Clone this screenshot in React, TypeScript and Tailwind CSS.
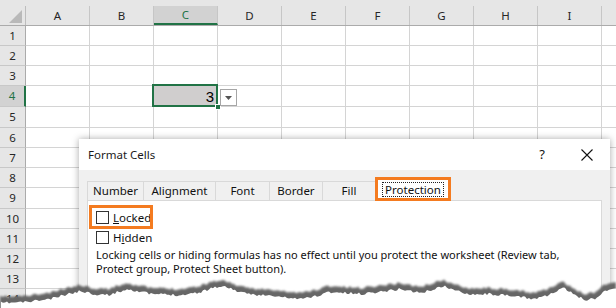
import React from 'react';

const COLS = ['A', 'B', 'C', 'D', 'E', 'F', 'G', 'H', 'I', ''];
const ROW_H = [20, 20, 20, 21, 21, 20, 20, 20, 21, 20, 20, 20, 20, 20];

// rough outline of the torn paper edge (page coords)
const ANCHORS: [number, number][] = [
  [0, 297], [25, 296], [50, 293], [67, 288], [80, 285], [93, 288], [107, 289],
  [127, 283], [150, 288], [180, 289], [200, 286], [213, 281], [227, 281],
  [240, 287], [260, 289], [290, 292], [300, 293], [320, 289], [327, 286],
  [360, 288], [400, 283], [420, 287], [443, 280], [455, 285], [470, 288],
  [490, 288], [507, 290], [520, 291], [533, 293], [550, 288], [563, 282],
  [572, 288], [585, 294], [595, 292], [605, 284], [616, 282],
];

function tornPath(top: number) {
  let seed = 11;
  const rnd = () => {
    seed = (seed * 16807) % 2147483647;
    return seed / 2147483647;
  };
  const pts: string[] = [];
  for (let x = 0; x <= 616; x += 2) {
    let i = 0;
    while (i < ANCHORS.length - 2 && ANCHORS[i + 1][0] < x) i++;
    const [x1, y1] = ANCHORS[i];
    const [x2, y2] = ANCHORS[i + 1];
    const t = x2 === x1 ? 0 : (x - x1) / (x2 - x1);
    let y = y1 + (y2 - y1) * Math.min(1, Math.max(0, t));
    y += (rnd() - 0.5) * 2.6;
    pts.push(`${x},${(y - top).toFixed(1)}`);
  }
  return 'M' + pts.join(' L') + ' L616,60 L0,60 Z';
}

function TornEdge() {
  const d = tornPath(262);
  return (
    <svg
      className="absolute left-0 top-[262px] pointer-events-none"
      width={616}
      height={46}
      viewBox="0 0 616 46"
    >
      <defs>
        <filter id="tear" x="-5%" y="-50%" width="110%" height="200%">
          <feGaussianBlur stdDeviation="1.3" />
        </filter>
      </defs>
      <path d={d} fill="#666666" filter="url(#tear)" />
      <path d={d} fill="#ffffff" transform="translate(1,6)" />
    </svg>
  );
}

function Checkbox() {
  return <div className="w-[13px] h-[13px] border border-[#333333] bg-white shrink-0" />;
}

function FormatCellsDialog() {
  const tabs = [
    { label: 'Number', w: 'w-[57px]' },
    { label: 'Alignment', w: 'w-[72px]' },
    { label: 'Font', w: 'w-[54px]' },
    { label: 'Border', w: 'w-[53px]' },
    { label: 'Fill', w: 'w-[53px]' },
  ];
  return (
    <div className="absolute left-[79px] top-[139px] w-[531px] h-[180px] bg-[#f0f0f0] shadow-[0_0_7px_rgba(0,0,0,0.35)] font-['Noto_Sans',sans-serif] text-[11px] text-[#111111]">
      <div className="h-[31px] bg-white flex items-center pl-[9px] pr-[17px]">
        <span className="text-[11.5px] text-[#1a1a1a]">Format Cells</span>
        <span className="ml-auto mr-[36px] text-[13px]">?</span>
        <svg width="12" height="12" viewBox="0 0 12 12">
          <path d="M0.5 0.5 L11.5 11.5 M11.5 0.5 L0.5 11.5" stroke="#111" strokeWidth="1.1" />
        </svg>
      </div>
      <div className="pt-[8px] px-[8px]">
        <div className="flex items-end h-[22px] text-[11.5px]">
          {tabs.map((t, i) => (
            <div
              key={t.label}
              className={`${t.w} h-[19px] flex items-center justify-center border-t border-r border-[#d9d9d9] ${i === 0 ? 'border-l' : ''}`}
            >
              {t.label}
            </div>
          ))}
          <div className="relative w-[74px] h-[23px] -mb-px bg-white flex items-center justify-center z-10">
            <span className="border border-dotted border-[#222] px-[2px] leading-[13px]">Protection</span>
            <div className="absolute -left-[1px] -top-[1px] w-[76px] h-[24px] border-[3px] border-[#f47b20]" />
          </div>
        </div>
        <div className="h-[120px] bg-white border border-[#d9d9d9] pl-[8px] pt-[10px]">
          <div className="relative flex items-center gap-[4px] h-[13px]">
            <Checkbox />
            <span className="text-[11.5px]">
              <span className="underline">L</span>ocked
            </span>
            <div className="absolute -left-[7px] -top-[6px] w-[64px] h-[24px] border-[3px] border-[#f47b20]" />
          </div>
          <div className="flex items-center gap-[4px] h-[13px] mt-[7px]">
            <Checkbox />
            <span className="text-[11.5px]">
              H<span className="underline">i</span>dden
            </span>
          </div>
          <p className="mt-[4px] leading-[14px]">
            Locking cells or hiding formulas has no effect until you protect the worksheet (Review tab,
            <br />
            Protect group, Protect Sheet button).
          </p>
        </div>
      </div>
    </div>
  );
}

export default function App() {
  return (
    <div className="relative w-[616px] h-[308px] overflow-hidden bg-white font-['Noto_Sans',sans-serif]">
      {/* column header */}
      <div className="flex items-end h-[26px] bg-[#e6e6e6] border-b border-[#ababab]">
        <div className="w-[26px] h-[19px] shrink-0 border-r border-[#bdbdbd] flex items-end justify-end pr-[3px] pb-[2px]">
          <svg width="13" height="13" viewBox="0 0 13 13">
            <path d="M13 0 L13 13 L0 13 Z" fill="#b9b9b9" />
          </svg>
        </div>
        {COLS.map((c, i) => (
          <div
            key={i}
            className={`w-[64px] h-[19px] shrink-0 flex items-center justify-center text-[11.5px] border-r border-[#c6c6c6] ${
              c === 'C' ? 'bg-[#d2d2d2] text-[#217346] border-b-2 border-b-[#217346]' : 'text-[#262626]'
            }`}
          >
            {c}
          </div>
        ))}
      </div>
      {/* rows */}
      {ROW_H.map((h, r) => {
        const sel = r === 3;
        return (
          <div key={r} className="flex" style={{ height: h }}>
            <div
              className={`w-[26px] shrink-0 flex items-center justify-center text-[11.5px] border-b border-[#c8c8c8] ${
                sel
                  ? 'bg-[#d2d2d2] text-[#217346] border-r-2 border-r-[#217346]'
                  : 'bg-[#e6e6e6] text-[#262626] border-r border-r-[#ababab]'
              }`}
            >
              {r + 1}
            </div>
            {COLS.map((c, i) => {
              const active = sel && c === 'C';
              return (
                <div
                  key={i}
                  className={`relative w-[64px] shrink-0 border-r border-b border-[#d4d4d4] ${
                    active ? 'bg-[#d0cece] z-10 flex items-center justify-end pr-[3px]' : ''
                  }`}
                >
                  {active && (
                    <>
                      <span className="font-['Liberation_Sans',sans-serif] text-[15px] text-black leading-none">3</span>
                      <div className="absolute -left-[2px] -top-[2px] -right-[1px] -bottom-[1px] border-2 border-[#217346]" />
                      <div className="absolute -right-[4px] -bottom-[4px] w-[6px] h-[6px] bg-[#217346] border border-white" />
                      <div className="absolute left-[66px] top-[3px] w-[17px] h-[17px] bg-white border border-[#a6a6a6] flex items-center justify-center">
                        <svg width="7" height="4" viewBox="0 0 7 4">
                          <path d="M0 0 L7 0 L3.5 4 Z" fill="#555" />
                        </svg>
                      </div>
                    </>
                  )}
                </div>
              );
            })}
          </div>
        );
      })}
      <FormatCellsDialog />
      <TornEdge />
    </div>
  );
}
